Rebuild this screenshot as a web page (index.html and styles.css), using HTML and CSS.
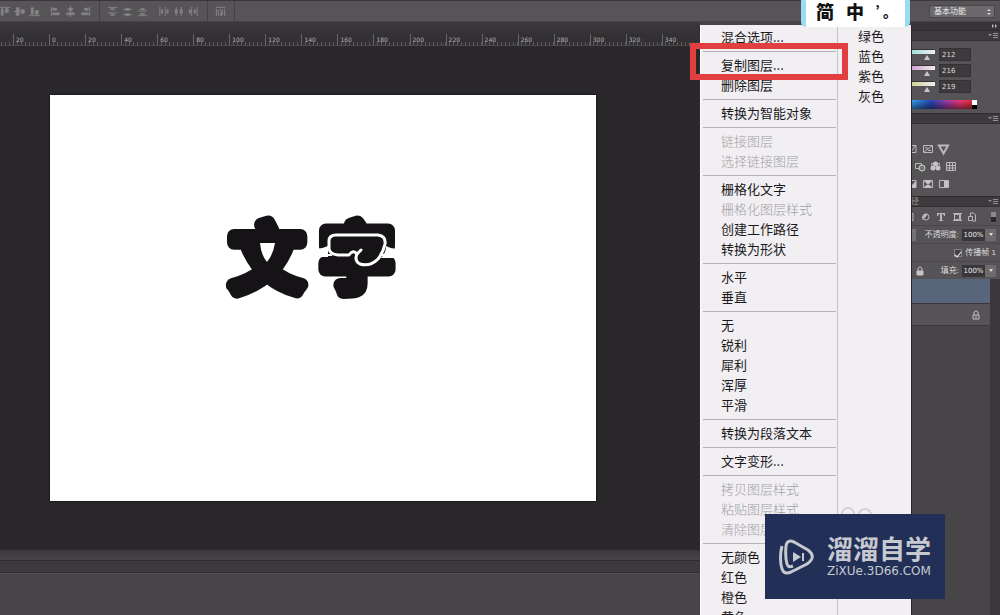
FILE: index.html
```html
<!DOCTYPE html>
<html lang="zh-CN">
<head>
<meta charset="utf-8">
<title>文字</title>
<link rel="stylesheet" href="styles.css">
</head>
<body>
<header class="toolbar">
  <div class="tools">
    <button class="tool" aria-label="顶对齐"><svg viewBox="0 0 12 12"><path d="M0 1.500h12M2.500 3v7h2V3zM7 3h3v4H7z"/></svg></button>
    <button class="tool" aria-label="垂直居中对齐"><svg viewBox="0 0 12 12"><path d="M0 6h12M2.500 2v8h3V2zM8 4h3v4H8z"/></svg></button>
    <button class="tool" aria-label="底对齐"><svg viewBox="0 0 12 12"><path d="M0 10.500h12M2.500 2v7h2V2zM7 5h3v4H7z"/></svg></button>
  </div>
  <div class="tools">
    <button class="tool" aria-label="左对齐"><svg viewBox="0 0 12 12"><path d="M1.500 1v10M3 2.500h4v2H3zM3 7.500h7v2H3z"/></svg></button>
    <button class="tool" aria-label="水平居中对齐"><svg viewBox="0 0 12 12"><path d="M6 0v12M4 2.500h4v2H4zM2 7.500h8v2H2z"/></svg></button>
    <button class="tool" aria-label="右对齐"><svg viewBox="0 0 12 12"><path d="M10.500 1v10M5 2.500h4v2H5zM2 7.500h7v2H2z"/></svg></button>
  </div>
  <div class="tools ruled">
    <button class="tool" aria-label="按顶分布"><svg viewBox="0 0 12 12"><path d="M1 1.500h10M1 7.500h10M4 3h4v1H4zM4 9h4v1H4z"/></svg></button>
    <button class="tool" aria-label="垂直居中分布"><svg viewBox="0 0 12 12"><path d="M1 4h10M1 9.500h10M4 2.500h4v2H4zM4 8.500h4v2H4z"/></svg></button>
    <button class="tool" aria-label="按底分布"><svg viewBox="0 0 12 12"><path d="M1 5.500h10M1 10.500h10M4 3h4v1H4zM4 8h4v1H4z"/></svg></button>
  </div>
  <div class="tools">
    <button class="tool" aria-label="按左分布"><svg viewBox="0 0 12 12"><path d="M2 1v10M8 1v10M4 4h1v4H4zM10 4h1v4h-1z"/></svg></button>
    <button class="tool" aria-label="水平居中分布"><svg viewBox="0 0 12 12"><path d="M3.500 1v10M9 1v10M2.500 4h2v4h-2zM8 4h2v4H8z"/></svg></button>
    <button class="tool" aria-label="按右分布"><svg viewBox="0 0 12 12"><path d="M4 1v10M10 1v10M1.500 4h1v4h-1zM7 4h1v4H7z"/></svg></button>
  </div>
  <div class="tools ruled end">
    <button class="tool" aria-label="自动对齐图层"><svg viewBox="0 0 12 12"><path d="M1 1.500h10M1.500 3v8M6 3v3M10.500 3v8M3.500 4v6h1M8 4v6H6V8"/></svg></button>
  </div>
  <select class="workspace-select" aria-label="工作区"><option>基本功能</option></select>
  <svg class="select-arrows" viewBox="0 0 6 8"><path d="M1 3l2-2 2 2zM1 5l2 2 2-2z"/></svg>
  <div class="ime"><span>简</span><span>中</span><span class="punct">’。</span></div>
</header>

<main class="app">
  <section class="document">
    <div class="tabbar"></div>
    <div class="ruler">
      <span>20</span><span>0</span><span>20</span><span>40</span><span>60</span><span>80</span><span>100</span><span>120</span><span>140</span><span>160</span><span>180</span><span>200</span><span>220</span><span>240</span><span>260</span><span>280</span><span>300</span><span>320</span><span>340</span>
    </div>
    <div class="stage">
      <div class="canvas">
        <svg class="art" viewBox="220 205 190 100">
          <text x="267" y="285">文</text>
          <text x="357" y="285">字</text>
          <path class="gap" d="M260 243H275Q273 255 267 262Q261 255 260 243M315 249Q322 249 328 246V257H315M386 246Q391 249 400 249V258H381Q386 253 386 246"/>
          <path class="swirl" d="M329 249V241Q329 235 336 235H378Q386 236 385 244Q383 253 378 259Q370 267 360 264Q354 261 357 254Q353 249 349 255H338Q330 254 329 249"/>
          <path class="swirl" d="M357 254L361 250"/>
        </svg>
      </div>
    </div>
    <div class="statusbar"></div>
    <div class="tabstrip"></div>
    <div class="timeline"></div>
  </section>

  <aside class="side">
    <div class="panels">
      <div class="collapse"><svg viewBox="0 0 6 6"><path d="M0 1l2 2-2 2zM3 1l2 2-2 2z"/></svg></div>
      <div class="panel-head"><svg viewBox="0 0 10 7"><path d="M0 2h4L2 4zM5 1h5v1H5zM5 3h5v1H5zM5 5h5v1H5z"/></svg></div>
      <div class="color">
        <label class="channel"><span class="track cyan"></span><input value="212" aria-label="红"></label>
        <label class="channel"><span class="track magenta"></span><input value="216" aria-label="绿"></label>
        <label class="channel"><span class="track yellow"></span><input value="219" aria-label="蓝"></label>
        <div class="spectrum"><i></i></div>
      </div>
      <div class="panel-head"><svg viewBox="0 0 10 7"><path d="M0 2h4L2 4zM5 1h5v1H5zM5 3h5v1H5zM5 5h5v1H5z"/></svg></div>
      <div class="adjust">
        <svg viewBox="0 0 89 50">
          <g fill="none" stroke="#bbb9bb"><path d="M-3 5.500h8v7h-8M0 12L4 6M12.500 5.500h9v7h-9zM13 12l8-6M14 8h3M17 10.500h3"/><path d="M28 5.500h9l-4.500 8z" stroke-width="2"/><path d="M4.500 23.500h6v5h-6zM20.500 25.500v-2h8v2M35.500 22.500h9v8h-9zM36 25.500h9M36 28h9M38.500 22v9M41.500 22v9"/><path d="M-3 40.500h8v7h-8M12.500 40.500h9v7h-9zM28.500 40.500h9v7h-9z"/></g>
          <circle cx="11" cy="28" r="3" fill="#777" stroke="#ccc"/>
          <g fill="#c4c2c4"><circle cx="24.500" cy="24" r="2.500"/><circle cx="22" cy="28" r="2.500"/><circle cx="27" cy="28" r="2.500"/><path d="M-1 47L5 41V47zM13 41l4 4 4-4zM13 47l4-3 4 3zM33 41h4v6h-4z"/></g>
        </svg>
      </div>
      <div class="panel-head"><span class="tab">径</span><svg viewBox="0 0 10 7"><path d="M0 2h4L2 4zM5 1h5v1H5zM5 3h5v1H5zM5 5h5v1H5z"/></svg></div>
      <div class="filters">
        <svg viewBox="0 0 89 20"><g fill="none" stroke="#b8b6b8"><path d="M-3 6.500h5v7h-5M43.500 7.500h5v5h-5zM42 6.500h9M42 13.500h9M43.500 6v8M49.500 6v8M59.500 9v-3h3l2 2v6h-3M57.500 9.500h4v4h-4z"/><circle cx="15" cy="10" r="3"/></g><path d="M12 13a4 4 0 0 1 5-6zM26 6h8v3h-1l-1-2h-1v6h1v1h-4v-1h1V7h-1l-1 2h-1z" fill="#b8b6b8"/><path d="M80 5h5v5h-5z" fill="#8c8a8c"/><path d="M80 10h5v5h-5z" fill="#29272a"/></svg>
      </div>
      <div class="row"><i class="stub"></i><label for="op">不透明度:</label><input id="op" value="100%"><button class="drop" aria-label="不透明度"></button></div>
      <div class="row"><input class="tick" type="checkbox" id="spread" checked><label for="spread">传播帧 1</label></div>
      <div class="row"><svg class="lock first" viewBox="0 0 8 10"><path d="M2 5V3a2 2 0 0 1 4 0v2" fill="none"/><path class="solid" d="M1 5h6v4H1z"/></svg><label for="fill">填充:</label><input id="fill" value="100%"><button class="drop" aria-label="填充"></button></div>
      <div class="layers">
        <div class="layer selected"></div>
        <div class="layer"><svg class="lock" viewBox="0 0 8 10"><path d="M2 5V3a2 2 0 0 1 4 0v2M1 5h6v4H1zM4 6v2" fill="none"/></svg></div>
        <div class="layers-empty"></div>
      </div>
    </div>

    <div class="menu">
      <div class="menu-col">
        <button>混合选项...</button><hr>
        <button>复制图层...</button><button>删除图层</button><hr>
        <button>转换为智能对象</button><hr>
        <button disabled>链接图层</button><button disabled>选择链接图层</button><hr>
        <button>栅格化文字</button><button disabled>栅格化图层样式</button><button>创建工作路径</button><button>转换为形状</button><hr>
        <button>水平</button><button>垂直</button><hr>
        <button>无</button><button>锐利</button><button>犀利</button><button>浑厚</button><button>平滑</button><hr>
        <button>转换为段落文本</button><hr>
        <button>文字变形...</button><hr>
        <button disabled>拷贝图层样式</button><button disabled>粘贴图层样式</button><button disabled>清除图层样式</button><hr>
        <button>无颜色</button><button>红色</button><button>橙色</button><button>黄色</button>
      </div>
      <div class="menu-col more">
        <button>绿色</button><button>蓝色</button><button>紫色</button><button>灰色</button>
      </div>
    </div>
    <div class="highlight"></div>

    <div class="brand">
      <svg class="bubbles" viewBox="0 0 34 8"><circle cx="8" cy="8" r="6"/><circle cx="25" cy="9" r="6"/></svg>
      <svg class="brand-mark" viewBox="0 0 36 36"><path d="M3 7C1 14 1 24 3 30Q5 36 12 33L28 25Q38 18 29 11L15 3Q8 0 7 7Q6 18 8 25Q9 29 14 27" fill="none" stroke="#c6c9d0" stroke-width="3" stroke-linejoin="round"/><path d="M14 13l8 5-8 5zM23 14h2v8h-2z" fill="#c6c9d0"/></svg>
      <div class="brand-text"><strong>溜溜自学</strong><span>ZiXUe.3D66.COM</span></div>
    </div>
  </aside>
</main>
</body>
</html>
```

FILE: styles.css
```css
* { box-sizing: border-box; }
body {
  margin: 0;
  height: 100vh;
  display: flex;
  flex-direction: column;
  overflow: hidden;
  background: #2a282b;
  color: #dddbdd;
  font: 9px/12px "Liberation Sans", "Noto Sans CJK SC", sans-serif;
}
button, input, select { font: inherit; color: inherit; border: 0; margin: 0; padding: 0; background: none; border-radius: 0; }
svg { display: block; }

.toolbar {
  position: relative;
  display: flex;
  align-items: center;
  height: 22px;
  flex: none;
  background: #565457;
  border-top: 1px solid #3a383b;
  border-bottom: 1px solid #464447;
}
.tools { display: flex; align-items: center; height: 20px; margin-right: 6px; }
.tools:first-child { margin-left: -3px; }
.tools.ruled { border-left: 1px solid #444245; padding-left: 5px; }
.tools.end { border-right: 1px solid #444245; padding-right: 6px; }
.tool { width: 15px; height: 15px; padding: 2px; }
.tool svg { width: 11px; height: 11px; fill: #858385; stroke: #858385; }
.workspace-select {
  appearance: none;
  margin-left: auto;
  margin-right: 5px;
  width: 66px;
  height: 13px;
  padding-left: 4px;
  background: #6b696c;
  border: 1px solid #49474a;
  font-size: 8px;
  line-height: 11px;
  color: #eee;
}
.select-arrows { position: absolute; right: 8px; top: 7px; width: 6px; height: 8px; fill: #d8d6d8; }
.ime {
  position: absolute;
  right: 90px;
  top: -1px;
  width: 109px;
  height: 27px;
  z-index: 2;
  display: flex;
  align-items: flex-start;
  gap: 12px;
  padding-left: 10px;
  background: #fff;
  border: solid #9bdcf0;
  border-width: 0 5px;
  border-radius: 0 0 5px 5px;
  color: #111;
  font: 900 18px/22px "Noto Sans CJK SC", sans-serif;
}
.ime .punct { font-size: 14px; }

.app { flex: 1; min-height: 0; display: grid; grid-template-columns: 1fr 300px; }
.document { display: flex; flex-direction: column; min-width: 0; }
.tabbar { height: 12px; background: linear-gradient(#3b393c, #343235); }
.ruler {
  height: 12px;
  display: flex;
  padding: 0 2px 0 13px;
  background: repeating-linear-gradient(90deg, #5b595c 0 1px, transparent 1px 4px) 1px 100% / 100% 3px no-repeat #323033;
  border-bottom: 1px solid #4a484b;
}
.ruler span { flex: 1; border-left: 1px solid #676568; padding-left: 2px; font: 6px/11px "DejaVu Sans", sans-serif; color: #b4b2b4; }
.stage { flex: 1; min-height: 0; display: flex; padding: 49px 104px 49px 50px; background: #2a282b; }
.canvas { flex: 1; background: #fff; box-shadow: 0 0 2px #000; padding: 110px 0 0 170px; }
.art { width: 190px; height: 100px; }
.art text {
  font: 500 73px "Noto Sans CJK SC", sans-serif;
  text-anchor: middle;
  fill: #151316;
  stroke: #151316;
  stroke-width: 14px;
  stroke-linejoin: round;
}
.gap { fill: #fff; }
.swirl { fill: #151316; stroke: #fff; stroke-width: 3; stroke-linecap: round; stroke-linejoin: round; }
.statusbar { height: 11px; background: linear-gradient(#3b393c, #454346); border-bottom: 1px solid #2e2c2f; }
.tabstrip { height: 12px; background: #3b393c; border-bottom: 1px solid #302e31; }
.timeline { height: 42px; background: #474548; border-top: 1px solid #504e51; }

.side { position: relative; display: flex; justify-content: flex-end; min-height: 0; background: #474548; }
.panels { width: 89px; display: flex; flex-direction: column; background: #555356; overflow: hidden; }
.collapse { height: 8px; background: #373538; display: flex; justify-content: flex-end; align-items: center; padding-right: 2px; }
.collapse svg { width: 6px; height: 6px; fill: #bbb; }
.panel-head { height: 11px; flex: none; display: flex; align-items: center; background: #3c3a3d; border-top: 1px solid #2d2b2e; border-bottom: 1px solid #333134; overflow: hidden; }
.panel-head svg { width: 10px; height: 7px; margin: 0 2px 0 auto; fill: #929092; }
.tab { font-size: 8px; color: #999; }
.color { height: 72px; display: flex; flex-direction: column; gap: 3px; padding-top: 7px; }
.channel { display: flex; gap: 4px; height: 13px; }
.track { position: relative; width: 24px; height: 5px; margin-top: 1px; border-top: 1px solid #333; }
.track::after { content: ""; position: absolute; left: 13px; top: 5px; border: solid transparent; border-width: 0 3px 5px; border-bottom-color: #c8c6c8; }
.cyan { background: linear-gradient(90deg, #9edada, #eee); }
.magenta { background: linear-gradient(90deg, #cf9fd0, #eee); }
.yellow { background: linear-gradient(90deg, #d0cf92, #eee); }
.channel input { width: 32px; height: 13px; padding-left: 2px; background: #3c3a3d; border: 1px solid #343235; font: 7px/11px "DejaVu Sans", sans-serif; }
.spectrum { width: 66px; height: 9px; margin-top: 4px; display: flex; justify-content: flex-end; background: linear-gradient(transparent, rgba(0,0,0,.5)), linear-gradient(90deg, #35a5ec, #2648bb 30%, #b33aa5 58%, #ee3a70 75%, #e32822); }
.spectrum i { width: 5px; background: linear-gradient(#fff 50%, #000 50%); }
.adjust { height: 72px; padding-top: 16px; }
.adjust svg { width: 89px; height: 50px; }
.filters { height: 18px; }
.filters svg { width: 89px; height: 20px; }
.row { height: 18px; flex: none; display: flex; align-items: center; justify-content: flex-end; padding-right: 4px; border-top: 1px solid #49474a; font-size: 8px; white-space: nowrap; }
.row label { margin-right: 3px; }
.row input:not(.tick) { width: 23px; height: 12px; background: #38363a; text-align: center; font: 7px/12px "DejaVu Sans", sans-serif; color: #eee; }
.stub { width: 5px; height: 12px; margin-right: auto; background: #747275; }
.drop { width: 11px; height: 12px; background: #6d6b6e; display: grid; place-items: center; }
.drop::after { content: ""; border: solid transparent; border-width: 3px 2px 0; border-top-color: #ddd; }
.tick { appearance: none; width: 8px; height: 8px; margin-right: 3px; border: 1px solid #858385; background: #454346; display: grid; place-items: center; }
.tick::after { content: ""; width: 3px; height: 6px; border: solid #eee; border-width: 0 1px 1px 0; transform: rotate(40deg); }
.tick + label { margin-right: 0; }
.lock { width: 8px; height: 10px; stroke: #c5c3c5; }
.lock .solid { fill: #c5c3c5; }
.lock.first { margin: 0 auto 0 5px; }
.layers { flex: 1; display: flex; flex-direction: column; padding-right: 10px; background: #3a383b; }
.layer { height: 22px; background: #555356; display: flex; align-items: center; justify-content: flex-end; padding-right: 10px; border-bottom: 1px solid #39373a; }
.layer.selected { height: 25px; background: #58657b; }
.layers-empty { flex: 1; background: #474548; }

.menu {
  position: absolute;
  left: 0;
  top: 3px;
  bottom: 0;
  width: 212px;
  display: flex;
  overflow: hidden;
  background: #f1eff2;
  border-left: 1px solid #fff;
  border-right: 1px solid #29272a;
}
.menu-col { flex: none; width: 136px; padding: 2px 1px 0 2px; }
.menu-col button { display: block; width: 100%; height: 20px; padding-left: 18px; text-align: left; font: 13px/20px "Noto Sans CJK SC", sans-serif; color: #1b191c; white-space: nowrap; }
.menu-col button:disabled { color: #a3a1a4; font-weight: 300; }
.menu-col hr { height: 1px; margin: 4px 0 3px; border: 0; background: #b5b3b6; }
.menu-col.more { width: 75px; padding-top: 1px; border-left: 1px solid #c4c2c5; }
.highlight { position: absolute; left: -10px; top: 21px; width: 158px; height: 37px; border: 6px solid #e23f41; }

.brand {
  position: absolute;
  right: 55px;
  bottom: 16px;
  width: 180px;
  height: 85px;
  display: flex;
  align-items: center;
  gap: 12px;
  padding-left: 14px;
  background: #222f57;
  color: #c6c9d0;
}
.bubbles { position: absolute; left: 75px; top: -8px; width: 34px; height: 8px; fill: none; stroke: #d3d1d4; stroke-width: 2; }
.brand-mark { width: 36px; height: 36px; flex: none; }
.brand-text { display: flex; flex-direction: column; padding-bottom: 4px; }
.brand-text strong { font: 700 26px/32px "Noto Sans CJK SC", sans-serif; }
.brand-text span { font: 12px/14px "DejaVu Sans", sans-serif; }
```
